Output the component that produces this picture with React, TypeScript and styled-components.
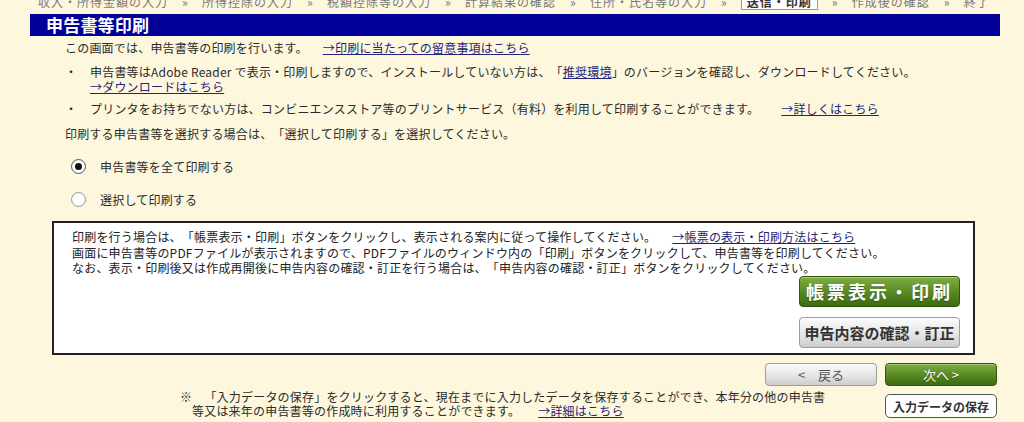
import React from 'react';
import styled, {createGlobalStyle, css} from 'styled-components';

const GlobalStyle = createGlobalStyle`
  html, body {
    margin: 0;
    padding: 0;
    background-color: #fdf7dd; // cream page
  }
  body {
    font-family: "Noto Sans CJK JP", "Noto Sans", sans-serif;
    font-size: 12px;
    letter-spacing: 0.2px;
    text-spacing-trim: space-all;
    color: #2b2b2b;
  }
`;

const Page = styled.div`
  width: 1024px;
  height: 422px;
  overflow: hidden;
  display: flex;
  flex-direction: column;
`;

const Breadcrumb = styled.nav`
  height: 10px;
  overflow: hidden;
  display: flex;
  align-items: flex-end;
  padding-left: 38px;
  color: #777;
  white-space: nowrap;
`;

const Crumb = styled.span<{ $current?: boolean }>`
  line-height: 12px;
  padding-bottom: 2px;
  letter-spacing: 1px;
  ${props => props.$current && css`
    font-weight: bold;
    color: #333;
    background: #fff;
    border: 1px solid #999;
    padding: 0 5px 1px;
  `}
`;

const Sep = styled.span`
  line-height: 12px;
  padding-bottom: 2px;
  margin: 0 14px;
`;

const Main = styled.main`
  margin: 4px 24px 0 30px;
  display: flex;
  flex-direction: column;
`;

const TitleBar = styled.h1`
  margin: 0;
  height: 22px;
  line-height: 22px;
  padding-left: 16px;
  background-color: #000099; // navy
  color: #fff;
  font-size: 17px;
  font-weight: bold;
`;

const Content = styled.div`
  padding-left: 35px;
  display: flex;
  flex-direction: column;
`;

const Text = styled.p<{ $top?: number }>`
  margin: ${props => props.$top ?? 0}px 0 0;
  line-height: 15px;
  white-space: nowrap;
`;

const Link = styled.a<{ $gap?: number }>`
  color: #24247a;
  text-decoration: underline;
  margin-left: ${props => props.$gap ?? 0}px;
  cursor: pointer;
`;

const Bullets = styled.ul`
  list-style: none;
  margin: 9px 0 0;
  padding: 0;
  display: flex;
  flex-direction: column;
  gap: 7px;
`;

const BulletItem = styled.li`
  display: flex;
  line-height: 15px;
  white-space: nowrap;
`;

const Mark = styled.span`
  width: 25px;
  flex: none;
`;

const RadioGroup = styled.div`
  margin-top: 15px;
  padding-left: 6px;
  display: flex;
  flex-direction: column;
  gap: 13px;
`;

const RadioRow = styled.label`
  display: flex;
  align-items: center;
  height: 20px;
  gap: 14px;
`;

const RadioDot = styled.span<{ $checked?: boolean }>`
  width: 15px;
  height: 15px;
  box-sizing: border-box;
  border-radius: 50%;
  border: 1px solid ${props => props.$checked ? '#555' : '#999'};
  background: radial-gradient(circle at 50% 50%, #fff 55%, #e0e0e0 100%);
  display: flex;
  align-items: center;
  justify-content: center;

  &::after {
    content: "";
    width: 7px;
    height: 7px;
    border-radius: 50%;
    background: ${props => props.$checked ? '#111' : 'transparent'};
  }
`;

const PrintBox = styled.section`
  margin: 12px 25px 0 22px;
  height: 134px;
  box-sizing: border-box;
  border: 2px solid #222;
  background: #fff;
  padding: 6px 13px 5px 18px;
  display: flex;
  flex-direction: column;
  color: #222;
`;

const BoxText = styled.div`
  line-height: 15.5px;
  white-space: nowrap;
`;

const ButtonColumn = styled.div`
  display: flex;
  flex-direction: column;
  align-items: flex-end;
  gap: 10px;
`;

const greenFace = css`
  background: linear-gradient(#80ad45, #5a8b24 50%, #3c6b10);
  border: 1px solid #2f5609;
  color: #fff;
  text-shadow: 0 1px 1px rgba(0, 0, 0, 0.35);
  box-shadow: inset 0 1px 0 rgba(255, 255, 255, 0.35);
`;

const grayFace = css`
  background: linear-gradient(#fbfbfb, #e8e8e8 50%, #cdcdcd);
  border: 1px solid #9c9c9c;
  color: #333;
  box-shadow: inset 0 1px 0 #fff;
`;

const BigButton = styled.button<{ $green?: boolean }>`
  width: 161px;
  height: 31px;
  border-radius: 4px;
  font-family: inherit;
  font-weight: bold;
  padding: 0;
  cursor: pointer;
  ${props => props.$green ? css`
    ${greenFace};
    font-size: 18px;
    letter-spacing: 3px;
  ` : css`
    ${grayFace};
    font-size: 15px;
    letter-spacing: 0;
  `}
`;

const Footer = styled.div`
  margin-top: 8px;
  display: flex;
  flex-direction: column;
  padding-right: 3px;
`;

const NavRow = styled.div`
  display: flex;
  justify-content: flex-end;
  gap: 8px;
`;

const NavButton = styled.button<{ $green?: boolean }>`
  width: 112px;
  height: 23px;
  border-radius: 4px;
  font-family: inherit;
  font-size: 13px;
  padding: 0;
  cursor: pointer;
  ${props => props.$green ? greenFace : grayFace};
  ${props => !props.$green && css`color: #555;`}
`;

const SaveRow = styled.div`
  margin-top: 4px;
  display: flex;
  align-items: flex-start;
`;

const Note = styled.div`
  margin: 0 0 0 150px;
  line-height: 14px;
  white-space: nowrap;
`;

const NoteIndent = styled.div`
  padding-left: 12px;
`;

const SaveButton = styled.button`
  margin: 4px 0 0 auto;
  width: 112px;
  height: 24px;
  border-radius: 5px;
  border: 1px solid #555;
  background: #fff;
  font-family: inherit;
  font-size: 12px;
  font-weight: bold;
  color: #333;
  padding: 0;
  cursor: pointer;
`;

const steps = [
  '収入・所得金額の入力',
  '所得控除の入力',
  '税額控除等の入力',
  '計算結果の確認',
  '住所・氏名等の入力',
  '送信・印刷',
  '作成後の確認',
  '終了',
];

export function App() {
  return (
    <Page>
      <GlobalStyle/>
      <Breadcrumb>
        {steps.map((step, i) => (
          <React.Fragment key={step}>
            {i > 0 && <Sep>»</Sep>}
            <Crumb $current={step === '送信・印刷'}>{step}</Crumb>
          </React.Fragment>
        ))}
      </Breadcrumb>
      <Main>
        <TitleBar>申告書等印刷</TitleBar>
        <Content>
          <Text $top={4}>
            この画面では、申告書等の印刷を行います。
            <Link $gap={15}>→印刷に当たっての留意事項はこちら</Link>
          </Text>
          <Bullets>
            <BulletItem>
              <Mark>・</Mark>
              <div>
                申告書等はAdobe Reader で表示・印刷しますので、インストールしていない方は、「<Link>推奨環境</Link>」のバージョンを確認し、ダウンロードしてください。
                <br/>
                <Link>→ダウンロードはこちら</Link>
              </div>
            </BulletItem>
            <BulletItem>
              <Mark>・</Mark>
              <div>
                プリンタをお持ちでない方は、コンビニエンスストア等のプリントサービス（有料）を利用して印刷することができます。
                <Link $gap={22}>→詳しくはこちら</Link>
              </div>
            </BulletItem>
          </Bullets>
          <Text $top={10}>印刷する申告書等を選択する場合は、「選択して印刷する」を選択してください。</Text>
          <RadioGroup>
            <RadioRow><RadioDot $checked/>申告書等を全て印刷する</RadioRow>
            <RadioRow><RadioDot/>選択して印刷する</RadioRow>
          </RadioGroup>
        </Content>
        <PrintBox>
          <BoxText>
            印刷を行う場合は、「帳票表示・印刷」ボタンをクリックし、表示される案内に従って操作してください。
            <Link $gap={16}>→帳票の表示・印刷方法はこちら</Link>
          </BoxText>
          <BoxText>画面に申告書等のPDFファイルが表示されますので、PDFファイルのウィンドウ内の「印刷」ボタンをクリックして、申告書等を印刷してください。</BoxText>
          <BoxText>なお、表示・印刷後又は作成再開後に申告内容の確認・訂正を行う場合は、「申告内容の確認・訂正」ボタンをクリックしてください。</BoxText>
          <ButtonColumn>
            <BigButton $green>帳票表示・印刷</BigButton>
            <BigButton>申告内容の確認・訂正</BigButton>
          </ButtonColumn>
        </PrintBox>
        <Footer>
          <NavRow>
            <NavButton>&lt;　戻る</NavButton>
            <NavButton $green>次へ &gt;</NavButton>
          </NavRow>
          <SaveRow>
            <Note>
              <div>※　「入力データの保存」をクリックすると、現在までに入力したデータを保存することができ、本年分の他の申告書</div>
              <NoteIndent>
                等又は来年の申告書等の作成時に利用することができます。
                <Link $gap={18}>→詳細はこちら</Link>
              </NoteIndent>
            </Note>
            <SaveButton>入力データの保存</SaveButton>
          </SaveRow>
        </Footer>
      </Main>
    </Page>
  );
}

export default App;
